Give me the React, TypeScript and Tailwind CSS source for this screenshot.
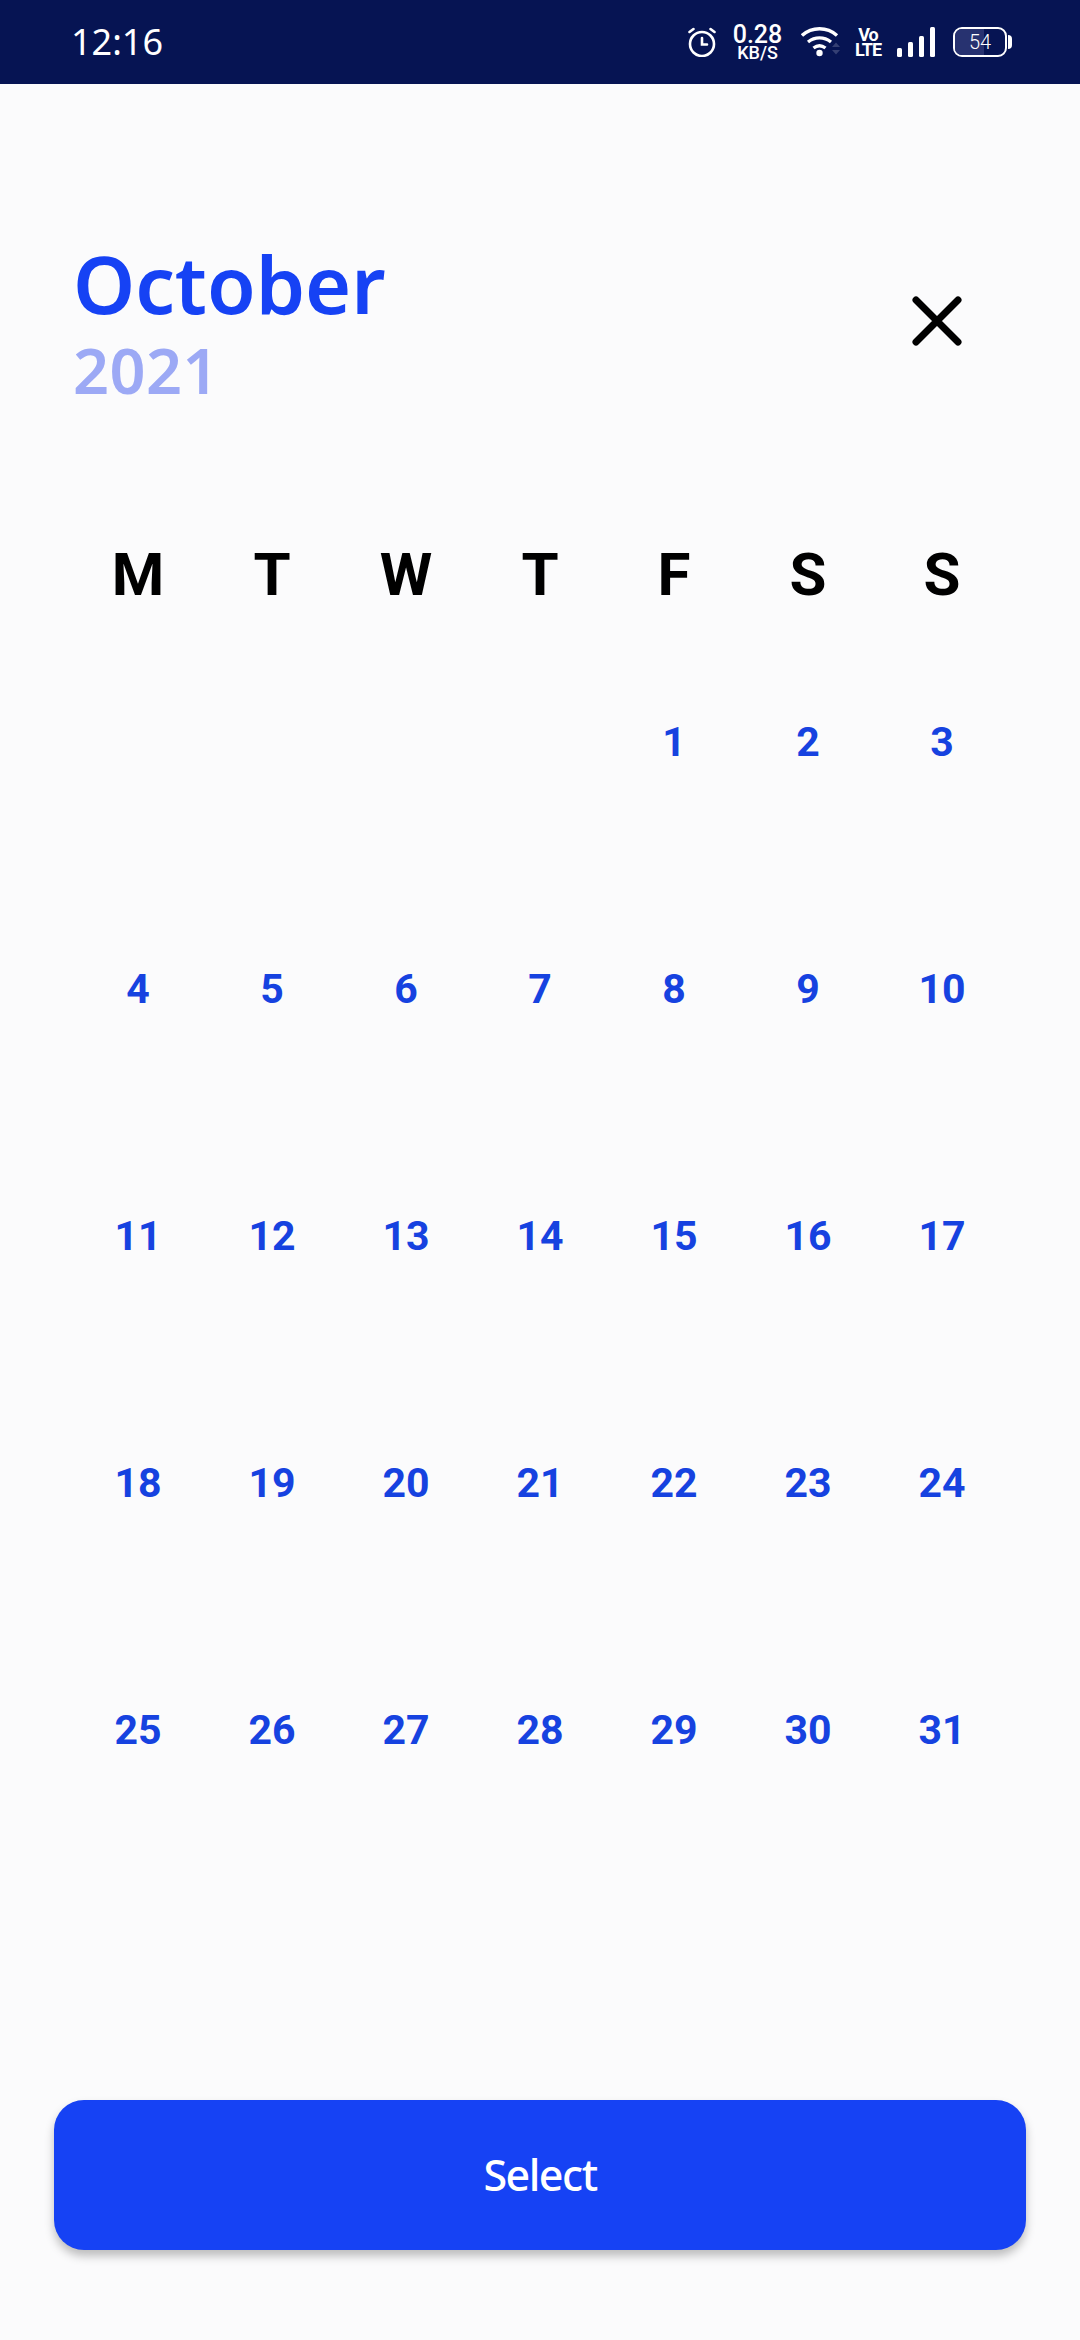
const HEADERS = ["M", "T", "W", "T", "F", "S", "S"];
const WEEKS: (number | null)[][] = [
  [null, null, null, null, 1, 2, 3],
  [4, 5, 6, 7, 8, 9, 10],
  [11, 12, 13, 14, 15, 16, 17],
  [18, 19, 20, 21, 22, 23, 24],
  [25, 26, 27, 28, 29, 30, 31],
];

function AlarmIcon() {
  return (
    <svg width="28" height="30" viewBox="0 0 28 30" fill="none" stroke="#fff" strokeWidth="2.6" strokeLinecap="round">
      <circle cx="14" cy="17" r="12" />
      <path d="M14 11v6.500h5" />
      <path d="M1.500 5l4-3M26.500 5l-4-3" />
    </svg>
  );
}

function WifiIcon() {
  return (
    <svg width="40" height="30" viewBox="0 0 40 30" fill="none">
      <path d="M1 8.500C11 -0.500 26 -0.500 36 8.500" stroke="#fff" strokeWidth="3.4" />
      <path d="M7 15c7-5.500 16-5.500 23 0" stroke="#fff" strokeWidth="3.4" />
      <path d="M12.500 21c4-3 8-3 12 0" stroke="#fff" strokeWidth="3.4" />
      <circle cx="18.500" cy="26" r="3.200" fill="#fff" />
      <path d="M31 20l4-4.500 4 4.500zM31 23l4 4.500 4-4.500z" fill="#343f73" />
    </svg>
  );
}

function SignalIcon() {
  return (
    <svg width="38" height="30" viewBox="0 0 38 30" fill="#fff">
      <rect x="0" y="21" width="5" height="9" rx="1.500" />
      <rect x="11" y="15" width="5" height="15" rx="1.500" />
      <rect x="22" y="9" width="5" height="21" rx="1.500" />
      <rect x="33" y="0" width="5" height="30" rx="1.500" />
    </svg>
  );
}

function BatteryIcon() {
  return (
    <div className="flex items-center gap-[1px]">
      <div className="relative flex h-[30px] w-[54px] items-center justify-center overflow-hidden rounded-[9px] border-2 border-white">
        <div className="absolute inset-y-0 left-0 w-[58%] bg-[#273270]" />
        <span className="relative font-['Roboto',sans-serif] text-[20px] font-light leading-none text-white">54</span>
      </div>
      <div className="h-[14px] w-[4px] rounded-r-full bg-white" />
    </div>
  );
}

function StatusBar() {
  return (
    <div className="flex h-[84px] items-center justify-between bg-[#061453] pl-[71px] pr-[68px] font-['Noto_Sans',sans-serif] text-white">
      <span className="text-[36px] leading-none">12:16</span>
      <div className="flex items-center">
        <AlarmIcon />
        <div className="ml-[16px] flex w-[51px] flex-col items-center font-['Roboto',sans-serif] font-medium">
          <span className="text-[25px] leading-[21px]">0.28</span>
          <span className="text-[18px] leading-[15px]">KB/S</span>
        </div>
        <div className="ml-[18px]">
          <WifiIcon />
        </div>
        <div className="ml-[15px] flex w-[24px] flex-col items-center font-['Roboto',sans-serif] text-[18px] font-bold leading-[15px] tracking-[-1px]">
          <span>Vo</span>
          <span>LTE</span>
        </div>
        <div className="ml-[17px]">
          <SignalIcon />
        </div>
        <div className="ml-[18px]">
          <BatteryIcon />
        </div>
      </div>
    </div>
  );
}

export default function App() {
  return (
    <div className="flex h-[2340px] w-[1080px] flex-col overflow-hidden bg-[#fbfbfc]">
      <StatusBar />

      <div className="mt-[155px] flex items-start justify-between pl-[73px] pr-[118px] font-['Noto_Sans',sans-serif]">
        <div>
          <div className="text-[79px] font-semibold leading-[90px] text-[#1642f4]">October</div>
          <div className="mt-[6px] text-[63px] font-semibold leading-[70px] tracking-[0.5px] text-[#9ca9f5]">2021</div>
        </div>
        <svg className="mt-[57px]" width="50" height="50" viewBox="0 0 50 50" fill="none" stroke="#000" strokeWidth="7" strokeLinecap="round">
          <path d="M4 4l42 42M46 4L4 46" />
        </svg>
      </div>

      <div className="mt-[138px] grid grid-cols-7 px-[71px] font-['Roboto',sans-serif] text-[60px] font-bold leading-[64px] text-black">
        {HEADERS.map((h, i) => (
          <div key={i} className="text-center">
            {h}
          </div>
        ))}
      </div>

      <div className="mt-[115px] flex flex-col gap-[207px] px-[71px] font-['Roboto',sans-serif] text-[41px] font-bold leading-[40px] text-[#1642e0]">
        {WEEKS.map((week, i) => (
          <div key={i} className="grid grid-cols-7">
            {week.map((d, j) => (
              <div key={j} className="text-center">
                {d}
              </div>
            ))}
          </div>
        ))}
      </div>

      <button className="mx-[54px] mt-[350px] flex h-[150px] items-center justify-center rounded-[30px] bg-[#1642f4] font-['Noto_Sans',sans-serif] text-[43px] font-medium tracking-[-1.500px] text-white shadow-[0_6px_10px_rgba(0,0,0,0.25)]">
        Select
      </button>
    </div>
  );
}
